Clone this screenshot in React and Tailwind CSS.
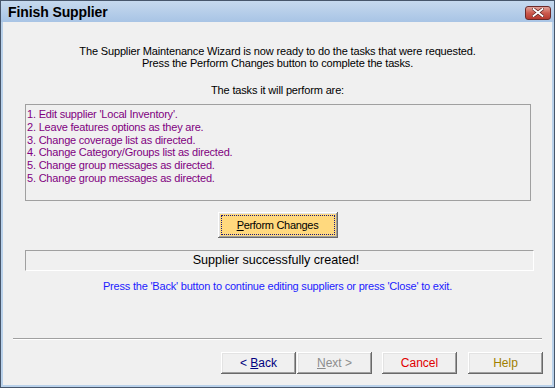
export default function App() {
  const font = { fontFamily: '"Liberation Sans", Arial, sans-serif' };
  const raised =
    "shadow-[inset_-1px_-1px_0_#696969,inset_1px_1px_0_#ffffff,inset_-2px_-2px_0_#a0a0a0,inset_2px_2px_0_#e3e3e3]";
  const tasks = [
    "1. Edit supplier 'Local Inventory'.",
    "2. Leave features options as they are.",
    "3. Change coverage list as directed.",
    "4. Change Category/Groups list as directed.",
    "5. Change group messages as directed.",
    "5. Change group messages as directed.",
  ];
  return (
    <div
      style={font}
      className="w-[555px] h-[388px] flex flex-col border border-[#47566b] bg-[#b9d1ea] overflow-hidden"
    >
      <div className="h-[21px] flex items-center justify-between bg-gradient-to-b from-[#c6d9ee] to-[#a8c4e5] pl-[7px] pr-[3px]">
        <span className="text-[14px] font-bold text-black leading-none tracking-[-0.1px]">
          Finish Supplier
        </span>
        <div className="w-[26px] h-[14px] mt-[2px] rounded-[3px] border border-[#6b2a2a] bg-gradient-to-b from-[#e0a29a] via-[#cc5a4e] to-[#b6392f] flex items-center justify-center">
          <svg width="12" height="9" viewBox="0 0 12 9">
            <path d="M1.5 1 L10.5 8 M10.5 1 L1.5 8" stroke="#5a2020" strokeWidth="3.2" strokeLinecap="square" />
            <path d="M1.5 1 L10.5 8 M10.5 1 L1.5 8" stroke="#ffffff" strokeWidth="1.8" strokeLinecap="square" />
          </svg>
        </div>
      </div>
      <div className="flex-1 mx-[2px] mb-[2px] bg-[#f0f0f0] flex flex-col">
        <div className="pt-[23px] text-center text-[11px] leading-[12px] text-black tracking-[-0.15px]">
          <div>The Supplier Maintenance Wizard is now ready to do the tasks that were requested.</div>
          <div>Press the Perform Changes button to complete the tasks.</div>
          <div className="mt-[15px]">The tasks it will perform are:</div>
        </div>
        <div className="mt-[8px] ml-[22px] w-[506px] h-[97px] border border-[#a0a0a0] pl-[1px] pt-[3px] text-[11px] leading-[12.8px] text-[#800080] tracking-[-0.2px]">
          {tasks.map((t, i) => (
            <div key={i}>{t}</div>
          ))}
        </div>
        <div className="mt-[11px] flex justify-center">
          <div className={`w-[120px] h-[26px] bg-[#ffd97e] p-[3px] ${raised}`}>
            <div className="w-full h-full border border-dotted border-[#1a1a80] flex items-center justify-center text-[11px] text-black tracking-[-0.3px]">
              <span>
                <span className="underline">P</span>erform Changes
              </span>
            </div>
          </div>
        </div>
        <div className="mt-[12px] ml-[22px] w-[509px] h-[21px] pr-[7px] border-t border-l border-[#a0a0a0] border-b border-r border-b-white border-r-white flex items-center justify-center text-[12.6px] text-black">
          Supplier successfully created!
        </div>
        <div className="mt-[9px] text-center text-[11px] leading-[12px] text-[#1c1cff] tracking-[-0.2px]">
          Press the 'Back' button to continue editing suppliers or press 'Close' to exit.
        </div>
        <div className="mt-[46px] ml-[10px] w-[529px] h-[2px] border-t border-[#a0a0a0] border-b border-b-white" />
        <div className="mt-[12px] flex pl-[218px] text-[12px]">
          <div className={`w-[75px] h-[22px] flex items-center justify-center text-[#000080] ${raised}`}>
            <span>
              &lt; <span className="underline">B</span>ack
            </span>
          </div>
          <div className={`ml-[1px] w-[75px] h-[22px] flex items-center justify-center text-[#8d8d8d] ${raised}`}>
            <span>
              <span className="underline">N</span>ext &gt;
            </span>
          </div>
          <div className={`ml-[10px] w-[75px] h-[22px] flex items-center justify-center text-[#e00000] ${raised}`}>
            Cancel
          </div>
          <div className={`ml-[11px] w-[75px] h-[22px] flex items-center justify-center text-[#a08000] ${raised}`}>
            Help
          </div>
        </div>
      </div>
    </div>
  );
}
